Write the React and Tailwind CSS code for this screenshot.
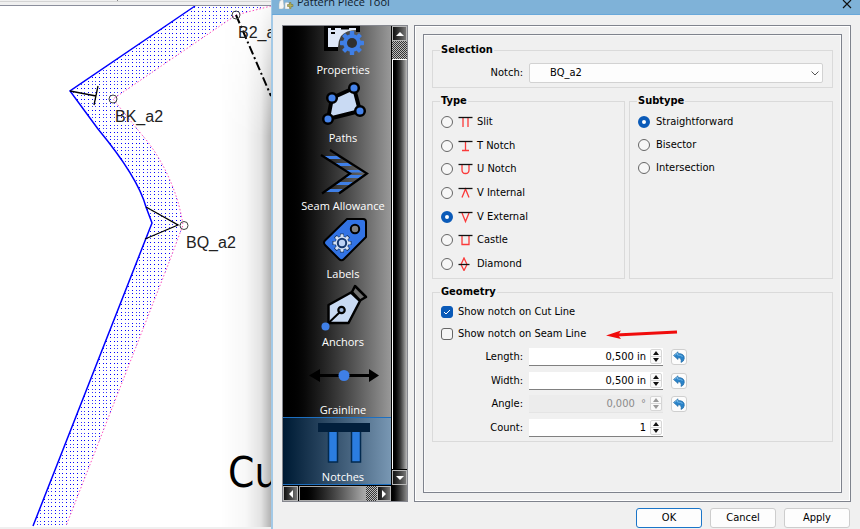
import React from "react";

const UI = "font-['DejaVu_Sans_Condensed','DejaVu_Sans',sans-serif]";

function PatternCanvas() {
  return (
    <svg viewBox="0 0 271 529" preserveAspectRatio="xMinYMin slice" className="block h-full w-full" role="img" aria-label="Pattern piece drawing">
      <defs>
        <pattern id="dots" width="11" height="11" patternUnits="userSpaceOnUse">
          {[0, 4, 7].map((y) =>
            [0, 4, 7].map((x) => (
              <rect key={`${x}-${y}`} x={x} y={y} width="1" height="1" fill="#0000ff" opacity={x && y ? 0.8 : 1} />
            ))
          )}
        </pattern>
        <linearGradient id="shade" x1="0" x2="1" y1="0" y2="0">
          <stop offset="0" stopColor="#000" stopOpacity="0" />
          <stop offset="0.5" stopColor="#000" stopOpacity="0.03" />
          <stop offset="0.8" stopColor="#000" stopOpacity="0.11" />
          <stop offset="1" stopColor="#000" stopOpacity="0.3" />
        </linearGradient>
        <linearGradient id="fade" x1="0" x2="0" y1="0" y2="1">
          <stop offset="0" stopColor="#fff" stopOpacity="0.1" />
          <stop offset="0.25" stopColor="#fff" />
        </linearGradient>
        <mask id="shadeMask">
          <rect x="220" y="6" width="51" height="521" fill="url(#fade)" />
        </mask>
      </defs>
      <rect width="271" height="529" fill="#fff" />
      <path d="M195 6 L70 91 L98 129 C122 158 140 185 146 207 L152 223 L33 526 L66 526 L168 265 L183 225 C178 190 160 155 142 135 L113 99 L236 15 L271 5 Z" fill="url(#dots)" />
      <path d="M271 6 L236 15 L113 99 L142 135 C160 155 178 190 183 225 L168 265 L66 526" fill="none" stroke="#ff50c0" strokeWidth="1" strokeDasharray="1.5 2" />
      <path d="M195 6 L70 91 L98 129 C122 158 140 185 146 207 L152 223 L33 526" fill="none" stroke="#0000ff" strokeWidth="1.5" />
      <g fill="none" stroke="#000" strokeWidth="1.3">
        <path d="M70 91 L96 96 M98 86 L94 105" />
        <path d="M146 207 L178 225 L145 239" />
      </g>
      <path d="M236 15 L271 96" stroke="#000" strokeWidth="2" strokeDasharray="9 3 2 3" />
      <g fill="none" stroke="#444" strokeWidth="1">
        <circle cx="113" cy="99" r="4" />
        <circle cx="184" cy="225.500" r="4" />
        <circle cx="236" cy="15" r="4" />
      </g>
      <g fill="#222" fontSize="16" fontFamily="'Liberation Sans', Arial, sans-serif">
        <text x="238" y="38">B2_a2</text>
        <text x="115" y="122">BK_a2</text>
        <text x="186" y="248">BQ_a2</text>
      </g>
      <text x="228" y="487" fontSize="42" fontFamily="'DejaVu Sans Condensed', 'DejaVu Sans', sans-serif">Cut</text>
      <rect x="220" y="6" width="51" height="521" fill="url(#shade)" mask="url(#shadeMask)" />
      <rect width="271" height="6" fill="#f0f0f0" />
      <rect y="1" width="271" height="1" fill="#d4d4d4" />
      <rect x="117" width="1" height="1" fill="#888" />
      <rect y="5" width="271" height="1" fill="#8b8e9c" />
      <rect y="527" width="271" height="2" fill="#f0f0f0" />
    </svg>
  );
}

function Gear({ cx, cy, r, teeth, tooth, fill }) {
  return (
    <g fill={fill}>
      {Array.from({ length: teeth }, (_, i) => (
        <rect key={i} x={cx - tooth / 2} y={cy - r} width={tooth} height={r} rx="0.6" transform={`rotate(${(360 / teeth) * i} ${cx} ${cy})`} />
      ))}
      <circle cx={cx} cy={cy} r={r * 0.74} />
    </g>
  );
}

const ICONS = {
  Properties: (
    <>
      <path d="M17 10 H53 V20 H49 V16 H21 V35 H31 V39 H17 Z" fill="#000" />
      <path d="M21 16 H49 V18 Q39 18 34 24 Q31 29 31 35 H21 Z" fill="#dfe8f8" />
      <path d="M24 16 h4 v2 h-4z M34 16 h8 v1.500 h-8z M24 20 h4 v2 h-4z" fill="#000" />
      <Gear cx={45} cy={31} r={12} teeth={8} tooth={4.4} fill="#3f7fe6" />
      <circle cx="45" cy="31" r="5" fill="#303030" />
    </>
  ),
  Paths: (
    <>
      <path d="M25 18 L47 8 L53 31 L21 39 Z" fill="#c9daf3" stroke="#000" strokeWidth="4" />
      {[[25, 18], [47, 8], [53, 31], [21, 39]].map(([x, y]) => (
        <circle key={x} cx={x} cy={y} r="4.800" fill="#4583ea" stroke="#000" strokeWidth="2.500" />
      ))}
    </>
  ),
  "Seam Allowance": (
    <>
      <path d="M17 8 H30 L34 11 H22Z M28 15 H41 L45 18 H33Z M38 22 H52 L56 24.500 H42Z M42 27 H56 L52 30 H38Z M33 34 H46 L42 37 H28Z M22 41 H36 L32 44 H17Z" fill="#3f7fe6" />
      <path d="M23 2 L60 25.500 L32 45.500 M14 7 L43 25.500 L15 45.500" fill="none" stroke="#000" strokeWidth="2.200" />
    </>
  ),
  Labels: (
    <>
      <path d="M40 3 H56 Q59 3 59 6 V21 L37 43 Q34.500 45.500 32 43 L18 29 Q16 26.500 18 24.500 Z" fill="#3273e4" stroke="#000" strokeWidth="2" strokeLinejoin="round" />
      <circle cx="48" cy="13" r="4.200" fill="#808080" stroke="#000" strokeWidth="2" />
      <Gear cx={35} cy={27} r={9.5} teeth={8} tooth={4} fill="#16345f" />
      <Gear cx={35} cy={27} r={8.7} teeth={8} tooth={3} fill="#d5e3f8" />
      <circle cx="35" cy="27" r="4.200" fill="#bcd2f5" stroke="#17396d" strokeWidth="2" />
    </>
  ),
  Anchors: (
    <>
      <path d="M21.500 39 V21 L44 8.500 L53 17 L41.500 39 Z" fill="#c9daf3" stroke="#000" strokeWidth="2.500" strokeLinejoin="round" />
      <path d="M48 2 L59 13 L53 16.500 L45 8 Z" fill="#6f6f6f" stroke="#000" strokeWidth="2.500" strokeLinejoin="round" />
      <path d="M21.500 39 L34 27" stroke="#000" strokeWidth="2" />
      <circle cx="34.500" cy="26" r="3.200" fill="#9db4d8" stroke="#000" strokeWidth="2.200" />
      <circle cx="18.500" cy="42.500" r="4" fill="#3f7fe6" />
    </>
  ),
  Grainline: (
    <>
      <path d="M8 23.500 H66" stroke="#000" strokeWidth="3" />
      <path d="M2 23.500 L13 17 V30 Z M72 23.500 L62 17 V30 Z" fill="#000" />
      <circle cx="37" cy="23.500" r="5.500" fill="#3f7fe6" />
    </>
  ),
  Notches: (
    <>
      <path d="M21.500 12 H30.500 V43 H21.500 Z M44.500 12 H53.500 V43 H44.500 Z" fill="#2b7de0" stroke="#022a4f" strokeWidth="1.500" />
      <path d="M11 4 H63 V13 H11 Z" fill="#021f3c" />
    </>
  ),
};

function ScrollArrow({ label, d, className }) {
  return (
    <button type="button" aria-label={label} className={`flex shrink-0 items-center justify-center border border-[#b8b8b8] bg-linear-to-r from-[#111] to-[#777] ${className}`}>
      <svg viewBox="0 0 8 8" className="size-2 shrink-0" aria-hidden="true">
        <path d={d} fill="#fff" />
      </svg>
    </button>
  );
}

const CHECKER = "bg-[repeating-conic-gradient(#333_0_25%,#bbb_0_50%)] bg-[length:2px_2px]";

function Sidebar() {
  return (
    <nav aria-label="Options" className="grid min-h-0 w-[126px] shrink-0 grid-cols-[1fr_16px] grid-rows-[minmax(0,1fr)_16px] border border-[#85878f] bg-black font-['Open_Sans','Noto_Sans',sans-serif]">
      <div className="flex min-h-0 flex-col items-start justify-end overflow-hidden bg-linear-to-r from-black to-[#999]">
        {Object.entries(ICONS).map(([name, icon]) => (
          <button
            key={name}
            type="button"
            className={`flex h-[68px] w-[120px] shrink-0 flex-col items-center justify-end text-white ${
              name === "Notches" ? "border-y border-[#1d6fc0] bg-linear-to-r from-[#001a33] to-[#88a7c3]" : ""
            }`}
          >
            <svg viewBox="0 0 72 48" className="mb-[3px] h-12 w-[72px] shrink-0" aria-hidden="true">
              {icon}
            </svg>
            <span className="text-[11px] leading-[14px] whitespace-nowrap">{name}</span>
          </button>
        ))}
      </div>
      <div className="flex min-h-0 flex-col bg-black pl-px">
        <ScrollArrow label="Scroll up" d="M4 2 L8 6 H0 Z" className="h-[15px]" />
        <div className={`h-[18px] shrink-0 ${CHECKER}`} />
        <div className="min-h-0 flex-1 border-t border-l border-white bg-linear-to-r from-black via-[#333] to-[#bbb]" />
        <ScrollArrow label="Scroll down" d="M0 2 H8 L4 6 Z" className="mt-px h-[15px]" />
      </div>
      <div className="flex min-w-0 bg-black pt-px">
        <ScrollArrow label="Scroll left" d="M6 0 V8 L2 4 Z" className="w-[15px]" />
        <div className="ml-px min-w-0 flex-1 border border-[#aaa] bg-linear-to-r from-black to-[#aaa]" />
        <div className={`w-[11px] shrink-0 ${CHECKER}`} />
        <ScrollArrow label="Scroll right" d="M2 0 V8 L6 4 Z" className="w-[14px]" />
      </div>
      <div className="bg-linear-to-r from-black to-[#8a8a8a]" />
    </nav>
  );
}

function Group({ title, className = "", children }) {
  return (
    <fieldset className={`min-w-0 border border-[#dadada] px-2 ${className}`}>
      <legend className="-ml-px px-px text-[11px] leading-[14px] font-bold">{title}</legend>
      {children}
    </fieldset>
  );
}

const NOTCHES = [
  ["Slit", "M5 3 V12 M10 3 V12"],
  ["T Notch", "M7.500 3 V11.500 M4 11.500 H11"],
  ["U Notch", "M4 3 V8 Q4 11.500 7.500 11.500 Q11 11.500 11 8 V3"],
  ["V Internal", "M4 11.500 L7.500 3 L11 11.500"],
  ["V External", "M4 3 L7.500 11.500 L11 3"],
  ["Castle", "M4 3 V11.500 H11 V3"],
  ["Diamond", "M6 1 L9 7.500 L6 13.500 L3 7.500 Z"],
];

function Radio({ name, label, icon, checked }) {
  return (
    <label className="flex h-[14px] items-center">
      <input
        type="radio"
        name={name}
        defaultChecked={checked}
        className="size-3 shrink-0 appearance-none rounded-full border border-[#666] bg-[#f7f7f7] checked:border-4 checked:border-[#0a5ab8] checked:bg-white"
      />
      {icon ? (
        <svg viewBox="0 0 15 14" className="ml-[5px] h-[14px] w-[15px] shrink-0" aria-hidden="true">
          <path d={icon} fill="none" stroke="#fa3a3a" strokeWidth="1.300" />
          <path d={label === "Diamond" ? "M0.500 7.500 H11.500" : "M0.500 2.500 H14.500"} stroke="#111" strokeWidth="1.300" />
        </svg>
      ) : null}
      <span className={icon ? "ml-1" : "ml-[6px]"}>{label}</span>
    </label>
  );
}

function Check({ label, checked, children }) {
  return (
    <div className="flex h-[22px] items-center">
      <label className="flex items-center">
        <span className="relative flex size-3 shrink-0">
          <input
            type="checkbox"
            defaultChecked={checked}
            className="peer size-3 appearance-none rounded-[3px] border border-[#666] bg-[#f5f5f5] checked:border-[#0a5ab8] checked:bg-[#0a5ab8]"
          />
          <svg viewBox="0 0 12 12" className="pointer-events-none absolute inset-0 hidden size-3 peer-checked:block" aria-hidden="true">
            <path d="M3 6 L5 8 L9 4" fill="none" stroke="#fff" strokeWidth="1" />
          </svg>
        </span>
        <span className="ml-[5px]">{label}</span>
      </label>
      {children}
    </div>
  );
}

function SpinRow({ label, value, disabled, reset = true }) {
  const id = `field-${label.toLowerCase()}`;
  const tone = disabled ? "#999" : "#111";
  return (
    <div className="flex h-[18px] items-center">
      <label htmlFor={id} className="w-[82px] shrink-0 text-right">
        {label}:
      </label>
      <div
        className={`ml-[6px] flex h-[18px] w-[134px] shrink-0 items-center border-b ${
          disabled ? "border-[#e4e4e4] bg-[#ececec]" : "border-[#808080] bg-white"
        }`}
      >
        <input
          id={id}
          defaultValue={value}
          disabled={disabled}
          className="h-4 min-w-0 flex-1 bg-transparent pr-1 text-right disabled:text-[#8a8a8a]"
        />
        <div className="mr-px flex h-[15px] w-3 shrink-0 flex-col rounded-[2px] border border-[#d6d6d6] bg-[#fafafa]">
          <button type="button" aria-label={`Increase ${label}`} disabled={disabled} className="flex h-[7px] items-center justify-center border-b border-[#d6d6d6]">
            <svg viewBox="0 0 6 4" className="h-1 w-[6px]" aria-hidden="true">
              <path d="M3 0 L6 4 H0 Z" fill={tone} />
            </svg>
          </button>
          <button type="button" aria-label={`Decrease ${label}`} disabled={disabled} className="flex h-[6px] items-center justify-center">
            <svg viewBox="0 0 6 4" className="h-1 w-[6px]" aria-hidden="true">
              <path d="M0 0 H6 L3 4 Z" fill={tone} />
            </svg>
          </button>
        </div>
      </div>
      {reset ? (
        <button type="button" aria-label={`Reset ${label}`} className="ml-2 flex size-4 shrink-0 items-center justify-center rounded-[3px] border border-[#cfcfcf] bg-[#fcfcfc]">
          <svg viewBox="0 0 12 12" className="size-3 shrink-0" aria-hidden="true">
            <path d="M0.500 4.500 L5 0.800 V2.500 Q11.700 2.500 11.300 7.500 Q11 10.500 8 11.500 Q9 6.800 5 6.800 V8.500 Z" fill="#2a83c9" stroke="#1c659f" strokeWidth="0.600" />
            <path d="M1.500 4.500 L4.500 2 V4 Q8 4 9.500 5.500" fill="none" stroke="#8ec8f0" strokeWidth="0.700" />
          </svg>
        </button>
      ) : null}
    </div>
  );
}

function Dialog() {
  return (
    <section aria-label="Pattern Piece Tool" className={`flex h-full min-w-0 flex-1 flex-col border-l-2 border-[#a3c9e6] bg-[#f0f0f0] text-[11px] leading-[14px] text-black ${UI}`}>
      <header className="-ml-px flex h-[15px] shrink-0 items-end justify-between overflow-hidden border-b border-[#68a8da] bg-[#7fb2d8] pr-2 pb-[5px] pl-[6px]">
        <div className="flex items-end">
          <svg viewBox="0 0 16 12" className="h-3 w-4" aria-hidden="true">
            <path d="M1 12 V7 Q1 3 5 2 L6 9 Q6 12 4 12 Z M7 12 V6 Q9 4 12 7 L13 12 Z" fill="#f6f6f6" stroke="#aab4bb" strokeWidth="0.500" />
            <path d="M9.500 7.500 H11.500 V5.500 H13 V7.500 H15 V9.500 H13 V11.500 H11.500 V9.500 H9.500 Z" fill="#b3b05c" stroke="#6e6c2c" strokeWidth="0.500" />
          </svg>
          <h1 className="ml-[3px] font-['Open_Sans','Noto_Sans',sans-serif] text-[11px] leading-[14px] text-[#10202c]">Pattern Piece Tool</h1>
        </div>
        <button type="button" aria-label="Close">
          <svg viewBox="0 0 10 10" className="size-[10px]" aria-hidden="true">
            <path d="M1 1 L9 9 M9 1 L1 9" stroke="#111" strokeWidth="1.200" />
          </svg>
        </button>
      </header>
      <div className="flex min-h-0 flex-1 gap-[6px] pt-[10px] pr-[9px] pl-[9px]">
        <Sidebar />
        <div className="min-w-0 flex-1 border border-[#7f838d] p-2 shadow-[inset_0_0_0_1px_#fff]">
          <div className="flex h-full min-w-0 flex-col gap-[6px] border border-[#7f838d] p-2 shadow-[inset_0_0_0_1px_#fafafa]">
            <Group title="Selection">
              <div className="flex items-center pt-[6px] pr-[1px] pb-1">
                <label htmlFor="notch" className="w-[82px] shrink-0 text-right">
                  Notch:
                </label>
                <div className="relative ml-[6px] min-w-0 flex-1">
                  <select id="notch" className="block h-5 w-full appearance-none rounded-[2px] border border-[#d2d2d2] bg-[#fdfdfd] pl-5">
                    <option>BQ_a2</option>
                  </select>
                  <svg viewBox="0 0 8 5" className="pointer-events-none absolute top-2 right-1 h-[5px] w-2" aria-hidden="true">
                    <path d="M0.500 0.500 L4 4 L7.500 0.500" fill="none" stroke="#555" />
                  </svg>
                </div>
              </div>
            </Group>
            <div className="grid grid-cols-[193fr_204fr] gap-1">
              <Group title="Type">
                <div className="flex h-[163px] flex-col justify-between pt-[7px]">
                  {NOTCHES.map(([label, icon]) => (
                    <Radio key={label} name="type" label={label} icon={icon} checked={label === "V External"} />
                  ))}
                </div>
                <div className="h-[7px]" />
              </Group>
              <Group title="Subtype">
                <div className="flex flex-col gap-[9px] pt-[7px]">
                  <Radio name="subtype" label="Straightforward" checked />
                  <Radio name="subtype" label="Bisector" />
                  <Radio name="subtype" label="Intersection" />
                </div>
              </Group>
            </div>
            <Group title="Geometry">
              <div className="pt-[2px]">
                <Check label="Show notch on Cut Line" checked />
                <Check label="Show notch on Seam Line">
                  <svg viewBox="0 0 72 12" className="ml-5 h-3 w-[72px] shrink-0" aria-hidden="true">
                    <path d="M10 7 L71 4" stroke="#f00c0c" strokeWidth="3" />
                    <path d="M0 7.500 L15 2.500 L12 7 L15 11 Z" fill="#f00c0c" />
                  </svg>
                </Check>
              </div>
              <div className="mt-[3px] mb-1 flex h-[89px] flex-col justify-between">
                <SpinRow label="Length" value="0,500 in" />
                <SpinRow label="Width" value="0,500 in" />
                <SpinRow label="Angle" value={"0,000 \u00a0°"} disabled />
                <SpinRow label="Count" value="1" reset={false} />
              </div>
            </Group>
          </div>
        </div>
      </div>
      <footer className="flex shrink-0 justify-end gap-2 pt-[6px] pr-[10px] pb-px">
        {["OK", "Cancel", "Apply"].map((label) => (
          <button
            key={label}
            type="button"
            className={`h-5 w-[66px] rounded-[3px] border bg-[#fdfdfd] text-center ${label === "OK" ? "border-[#1b75c8]" : "border-[#cdcdcd]"}`}
          >
            {label}
          </button>
        ))}
      </footer>
    </section>
  );
}

export default function App() {
  return (
    <main className="flex h-screen w-full overflow-hidden bg-white">
      <div className="h-full w-[271px] shrink-0 overflow-hidden">
        <PatternCanvas />
      </div>
      <Dialog />
    </main>
  );
}
